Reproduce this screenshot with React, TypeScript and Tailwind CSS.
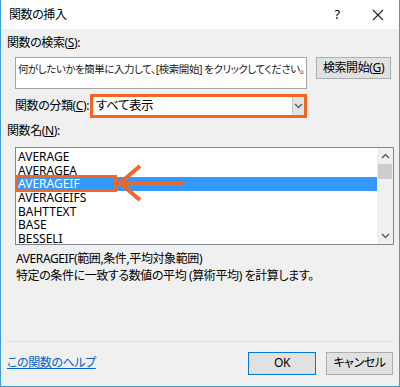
const FONT = "font-['Noto_Sans','Noto_Sans_CJK_JP',sans-serif]";

const FUNCS = ['AVERAGE', 'AVERAGEA', 'AVERAGEIF', 'AVERAGEIFS', 'BAHTTEXT', 'BASE', 'BESSELI'];

function Chevron({ up }: { up?: boolean }) {
  return (
    <svg width="9" height="6" viewBox="0 0 9 6" className="block">
      <path
        d={up ? 'M1 5 L4.5 1.5 L8 5' : 'M1 1 L4.5 4.5 L8 1'}
        fill="none"
        stroke="#606060"
        strokeWidth="1.5"
      />
    </svg>
  );
}

export default function App() {
  return (
    <div
      className={`relative w-[400px] h-[387px] bg-[#f0f0f0] border-x border-b border-[#3d9be0] flex flex-col text-[12px] text-black tracking-[-0.4px] [font-feature-settings:'palt'] ${FONT}`}
    >
      {/* title bar */}
      <div className="h-[29px] bg-white flex items-center pl-[8px] shrink-0">
        <span className="flex-1">関数の挿入</span>
        <span className="w-[14px] text-center text-[13px] mr-[28px]">?</span>
        <svg width="12" height="12" viewBox="0 0 12 12" className="mr-[15px]">
          <path d="M1 1 L11 11 M11 1 L1 11" stroke="#222" strokeWidth="1.1" />
        </svg>
      </div>

      <div className="flex flex-col px-[6px] flex-1">
        <div className="mt-[6px] h-[16px] leading-[16px]">
          関数の検索(<span className="underline">S</span>):
        </div>

        {/* search row */}
        <div className="flex mt-[6px] pl-[8px]">
          <div className="w-[292px] h-[32px] bg-white border border-[#a5a5a5] pl-[2px] pt-[3px] leading-[16px] text-[#222] text-[10.5px] tracking-[-0.45px] whitespace-nowrap">
            何がしたいかを簡単に入力して、[検索開始] をクリックしてください。
          </div>
          <div className="ml-[9px] w-[75px] h-[22px] bg-[#e1e1e1] border border-[#adadad] flex items-center justify-center">
            検索開始(<span className="underline">G</span>)
          </div>
        </div>

        {/* category row */}
        <div className="flex items-center mt-[5px] pl-[8px]">
          <span className="w-[75px]">
            関数の分類(<span className="underline">C</span>):
          </span>
          <div className="w-[217px] h-[24px] border-[3px] border-[#f26522] flex">
            <div className="flex-1 bg-white flex items-center pl-[3px] text-[12.5px]">すべて表示</div>
            <div className="w-[12px] bg-[#e3e3e3] border-l border-[#c8c8c8] flex items-center justify-center">
              <Chevron />
            </div>
          </div>
        </div>

        <div className="mt-[5px] h-[16px] leading-[16px]">
          関数名(<span className="underline">N</span>):
        </div>

        {/* list */}
        <div className="ml-[8px] mt-[8px] w-[379px] h-[98px] border border-[#828790] bg-white flex">
          <div className="flex-1 flex flex-col pt-[2px] tracking-normal">
            {FUNCS.map((f) => (
              <div
                key={f}
                className={`h-[13.7px] leading-[13.7px] pl-[2px] ${
                  f === 'AVERAGEIF' ? 'bg-[#3399ff] text-white' : ''
                }`}
              >
                {f}
              </div>
            ))}
          </div>
          <div className="w-[16px] bg-[#f0f0f0] flex flex-col items-center">
            <div className="h-[16px] flex items-center justify-center">
              <Chevron up />
            </div>
            <div className="w-[14px] h-[15px] bg-[#cdcdcd]" />
            <div className="flex-1" />
            <div className="h-[16px] flex items-center justify-center">
              <Chevron />
            </div>
          </div>
        </div>

        {/* description */}
        <div className="pl-[9px] mt-[5px] leading-[17px]">
          <div>AVERAGEIF(範囲,条件,平均対象範囲)</div>
          <div>特定の条件に一致する数値の平均 (算術平均) を計算します。</div>
        </div>

        <div className="flex-1" />
        <div className="h-px bg-[#dcdcdc]" />

        {/* footer */}
        <div className="flex items-center h-[44px] pb-[2px]">
          <span className="flex-1 text-[#0066cc] underline">この関数のヘルプ</span>
          <div className="w-[68px] h-[23px] bg-[#e1e1e1] border border-[#0078d7] flex items-center justify-center">
            OK
          </div>
          <div className="ml-[10px] w-[67px] h-[23px] bg-[#e1e1e1] border border-[#adadad] flex items-center justify-center">
            キャンセル
          </div>
        </div>
      </div>

      {/* annotation arrow */}
      <svg className="absolute left-0 top-0 pointer-events-none" width="400" height="387">
        <rect x="15.5" y="176.5" width="99" height="14" fill="none" stroke="#f26522" strokeWidth="3" />
        <path d="M139 166 L119 183 L139 200" fill="none" stroke="#f26522" strokeWidth="4" />
        <path d="M123 183 L183 183" stroke="#f26522" strokeWidth="3.5" />
      </svg>
    </div>
  );
}
